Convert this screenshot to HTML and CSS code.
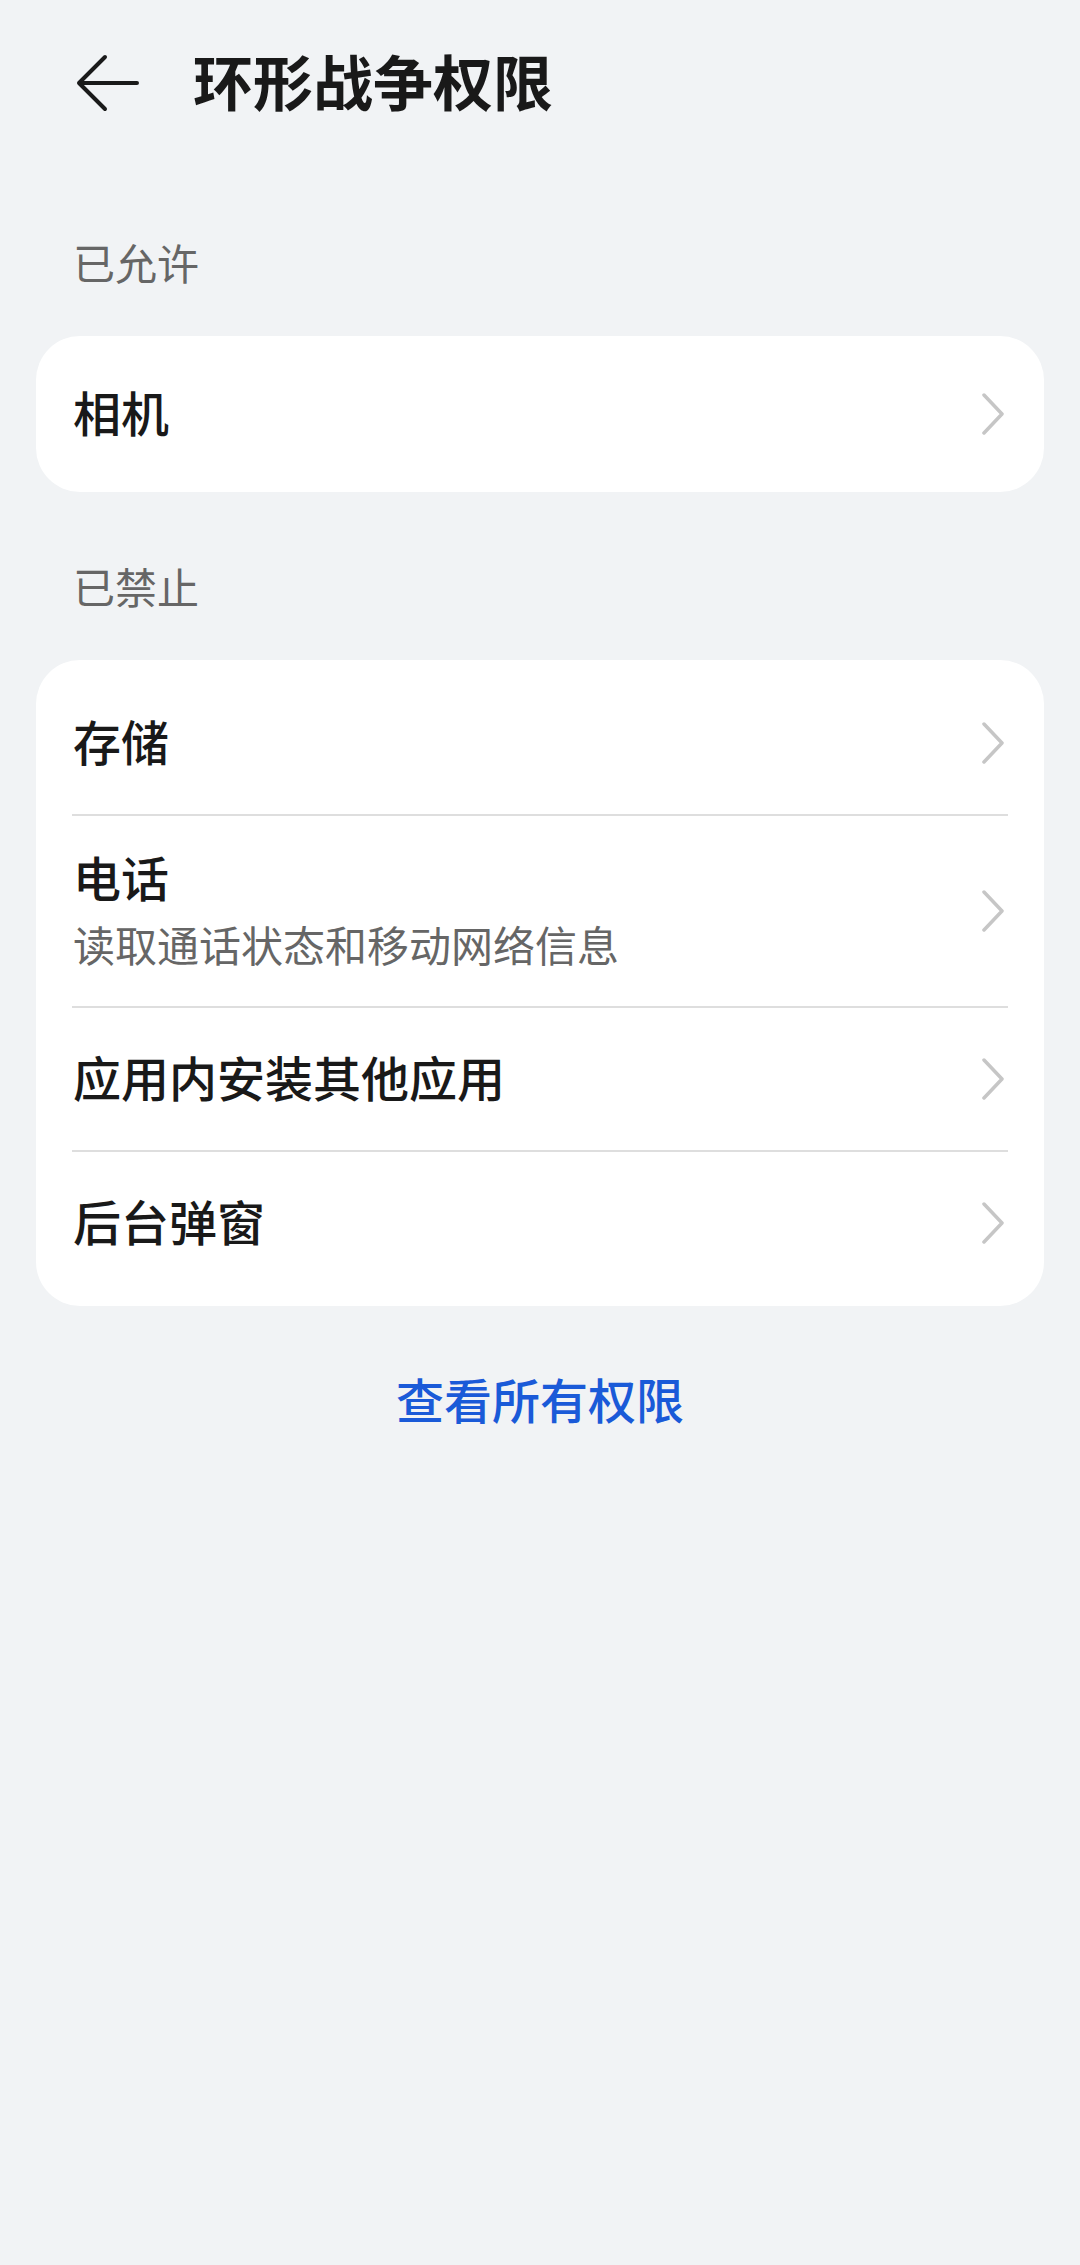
FILE: index.html
```html
<!DOCTYPE html>
<html lang="zh-CN">
<head>
  <meta charset="UTF-8">
  <meta name="viewport" content="width=device-width, initial-scale=1.0">
  <title>环形战争权限</title>
  <link rel="stylesheet" href="styles.css">
</head>
<body>

<div class="page">
  <div class="header">
    <button class="btn-voltar" aria-label="返回">
      <svg width="64" height="60" viewBox="0 0 64 60">
        <path d="M3 29 H61 M29 3 L3 29 L29 55" fill="none" stroke="#1a1a1a" stroke-width="4" stroke-linecap="round" stroke-linejoin="round"/>
      </svg>
    </button>
    <h2>环形战争权限</h2>
  </div>

  <div class="secao">已允许</div>
  <div class="card card-unico">
    <div class="linha">
      <div class="texto"><div class="titulo">相机</div></div>
      <svg class="seta" width="26" height="48" viewBox="0 0 26 48"><path d="M2 5 L20 24 L2 43" /></svg>
    </div>
  </div>

  <div class="secao">已禁止</div>
  <div class="card">
    <div class="linha">
      <div class="texto"><div class="titulo">存储</div></div>
      <svg class="seta" width="26" height="48" viewBox="0 0 26 48"><path d="M2 5 L20 24 L2 43" /></svg>
    </div>
    <div class="divisor"></div>
    <div class="linha linha-dupla">
      <div class="texto">
        <div class="titulo">电话</div>
        <div class="subtitulo">读取通话状态和移动网络信息</div>
      </div>
      <svg class="seta" width="26" height="48" viewBox="0 0 26 48"><path d="M2 5 L20 24 L2 43" /></svg>
    </div>
    <div class="divisor"></div>
    <div class="linha">
      <div class="texto"><div class="titulo">应用内安装其他应用</div></div>
      <svg class="seta" width="26" height="48" viewBox="0 0 26 48"><path d="M2 5 L20 24 L2 43" /></svg>
    </div>
    <div class="divisor"></div>
    <div class="linha">
      <div class="texto"><div class="titulo">后台弹窗</div></div>
      <svg class="seta" width="26" height="48" viewBox="0 0 26 48"><path d="M2 5 L20 24 L2 43" /></svg>
    </div>
  </div>

  <div class="link-todos">查看所有权限</div>
</div>

</body>
</html>
```

FILE: styles.css
```css
body {
    font-family: "Noto Sans CJK SC", "Noto Sans", sans-serif;
    margin: 0;
    background-color: #f1f3f5;
    color: #191919;
}

.page {
    min-height: 100vh;
    padding: 0 36px;
    box-sizing: border-box;
}

.header {
    height: 168px;
    display: flex;
    align-items: center;
    padding-left: 40px;
}

.btn-voltar {
    width: 64px;
    height: 60px;
    padding: 0;
    border: none;
    background: none;
    display: flex;
}

h2 {
    margin: 0 0 0 53px;
    padding-bottom: 8px;
    font-size: 60px;
    line-height: 80px;
    font-weight: 700;
    color: #191919;
}

.secao {
    margin: 66px 0 46px;
    padding-left: 37px;
    font-size: 42px;
    line-height: 56px;
    color: #666;
}

.card {
    background-color: white;
    border-radius: 44px;
    padding: 12px 0;
}

.card-unico {
    padding: 6px 0;
}

.linha {
    display: flex;
    align-items: center;
    min-height: 142px;
    padding: 0 36px 0 37px;
}

.card-unico .linha {
    min-height: 144px;
}

.linha-dupla {
    min-height: 190px;
}

.texto {
    flex: 1;
    padding-bottom: 6px;
}

.titulo {
    font-size: 48px;
    line-height: 64px;
    font-weight: 500;
}

.subtitulo {
    margin-top: 8px;
    font-size: 42px;
    line-height: 56px;
    color: #666;
}

.seta path {
    fill: none;
    stroke: #c6c6c6;
    stroke-width: 3.5;
    stroke-linecap: round;
    stroke-linejoin: round;
}

.divisor {
    height: 2px;
    margin: 0 36px;
    background-color: #dedede;
}

.link-todos {
    margin-top: 60px;
    text-align: center;
    font-size: 48px;
    line-height: 64px;
    font-weight: 500;
    color: #1a5ad8;
}
```
